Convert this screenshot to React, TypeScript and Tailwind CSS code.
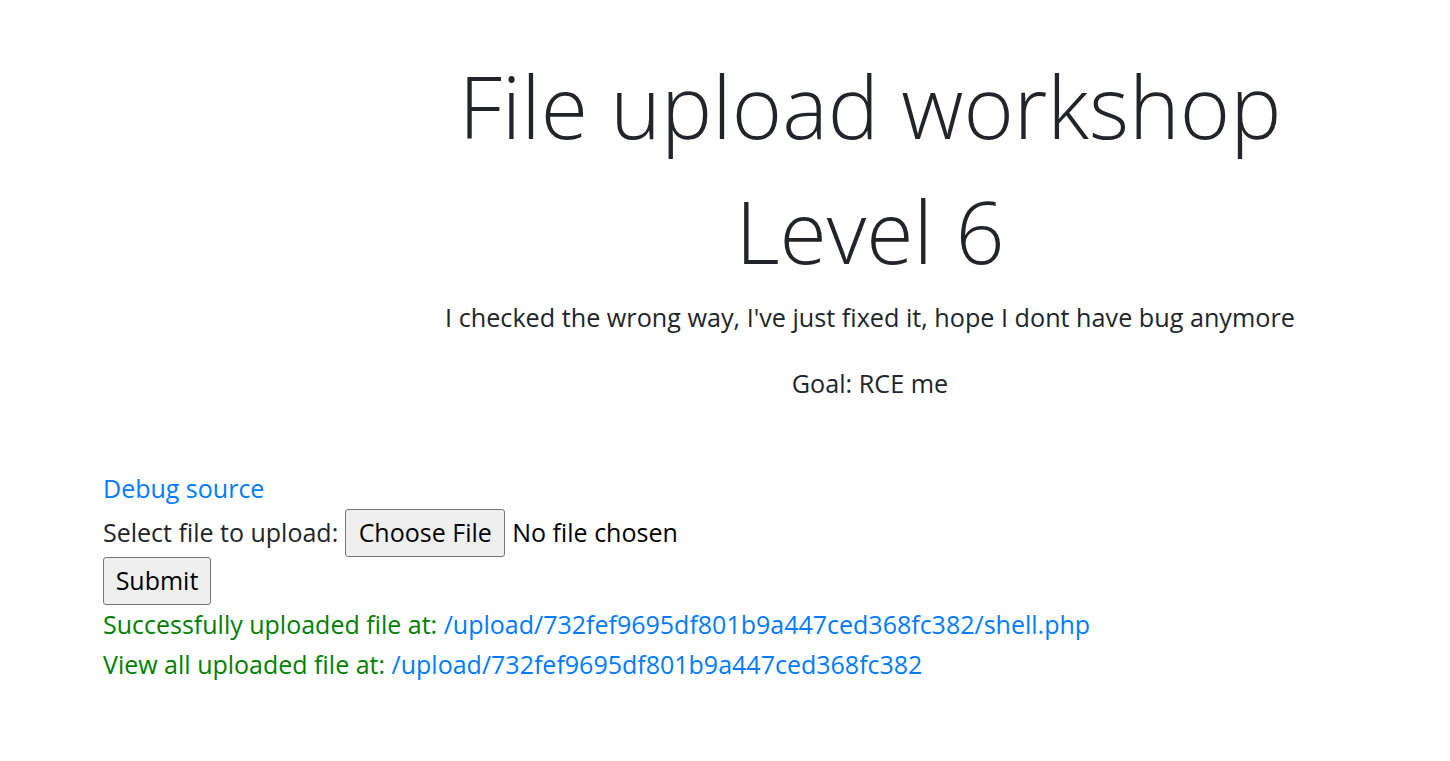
import React from "react";

const UPLOAD_DIR = "/upload/732fef9695df801b9a447ced368fc382";

const App = () => {
  return (
    <div className="min-h-[761px] bg-white font-['Segoe_UI','Open_Sans',sans-serif] text-[#212529]">
      {/* HEADER */}
      <div className="ml-[430px] w-[880px] pt-[43px] text-center">
        <h1 className="text-[86px] font-light leading-[125px]">File upload workshop Level 6</h1>
        <p className="mt-[6px] text-[25.2px] leading-[36px]">
          I checked the wrong way, I've just fixed it, hope I dont have bug anymore
        </p>
        <p className="mt-[30px] text-[25.2px] leading-[36px]">Goal: RCE me</p>
      </div>

      {/* FORM */}
      <div className="mt-[68px] pl-[103px] text-[25px]">
        <div className="flex h-[40px] items-center">
          <a href="#" className="text-[#007bff]">Debug source</a>
        </div>
        <div className="flex h-[48px] items-center">
          <span>Select file to upload:</span>
          <button className="ml-[7px] h-[48px] w-[160px] rounded-[3px] border border-[#767676] bg-[#efefef] text-black">
            Choose File
          </button>
          <span className="ml-[7px] text-black">No file chosen</span>
        </div>
        <div className="flex h-[48px] items-center">
          <button className="h-[48px] w-[108px] rounded-[3px] border border-[#767676] bg-[#efefef] text-black">
            Submit
          </button>
        </div>
        <div className="flex h-[40px] items-center text-[#008000]">
          Successfully uploaded file at:&nbsp;
          <a href="#" className="text-[#007bff]">{UPLOAD_DIR}/shell.php</a>
        </div>
        <div className="flex h-[40px] items-center text-[#008000]">
          View all uploaded file at:&nbsp;
          <a href="#" className="text-[#007bff]">{UPLOAD_DIR}</a>
        </div>
      </div>
    </div>
  );
};

export default App;
